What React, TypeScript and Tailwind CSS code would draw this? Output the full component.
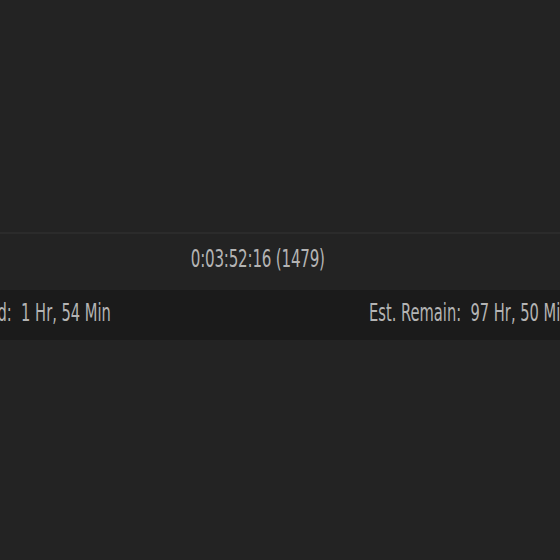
export default function App() {
  return (
    <div
      className="h-[560px] w-[560px] overflow-hidden bg-[#232323] text-[#b4b4b4]"
      style={{ fontFamily: '"DejaVu Sans Condensed", "DejaVu Sans", sans-serif' }}
    >
      <div className="h-[232px]" />
      <div className="h-[2px] bg-[#2b2b2b]" />
      <div className="flex h-[56px] items-center justify-center pb-[6px] pr-[45px]">
        <span className="inline-block origin-center scale-x-[0.7] whitespace-nowrap text-[24px] tracking-[-0.3px]">
          0:03:52:16 (1479)
        </span>
      </div>
      <div className="flex h-[50px] items-center whitespace-nowrap bg-[#1b1b1b] pb-[4px] text-[24px]">
        <div className="flex w-[111px] shrink-0 justify-end">
          <span className="inline-block origin-right scale-x-[0.68]">Elapsed:&nbsp; 1 Hr, 54 Min</span>
        </div>
        <div className="ml-[258px] shrink-0">
          <span className="inline-block origin-left scale-x-[0.68]">Est. Remain:&nbsp; 97 Hr, 50 Min</span>
        </div>
      </div>
    </div>
  );
}
